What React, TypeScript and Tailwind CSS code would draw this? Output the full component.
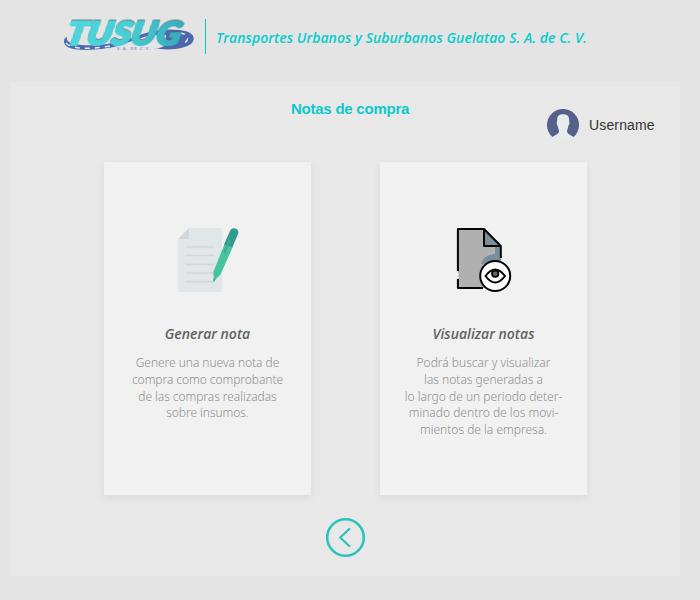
import React from "react";

function Logo() {
  return (
    <svg width="134" height="50" viewBox="0 -8 134 50" className="block shrink-0">
      <defs>
        <linearGradient id="aqua" gradientUnits="userSpaceOnUse" x1="0" x2="125" y1="-20" y2="0">
          <stop offset="0" stopColor="#50d8de" />
          <stop offset="0.5" stopColor="#46ced5" />
          <stop offset="1" stopColor="#35a5b5" />
        </linearGradient>
      </defs>
      <path
        d="M5 22C1 23 0 30 8 33C20 37 44 34 56 31C74 25 86 18 104 20L104 30C99 33 96 33.5 92 33C106 36 124 34 130 28C135 21 129 16 117 15C100 13 86 17 72 22C50 30 28 32 12 29C7 28 4 25 5 22Z"
        fill="#4d68ac"
      />
      <path d="M4 28C11 36 40 34 60 28M118 18C126 19 129 24 121 29" fill="none" stroke="#e7edf5" strokeWidth="1.4" strokeDasharray="5 5" />
      <g
        transform="translate(0 30) skewX(-12)"
        fontFamily="Lato, sans-serif"
        fontSize="32"
        fontWeight="900"
        fontStyle="italic"
        strokeLinejoin="round"
      >
        <text x="3" y="0" textLength="114" lengthAdjust="spacingAndGlyphs" paintOrder="stroke" fill="url(#aqua)" stroke="url(#aqua)" strokeWidth="2.2" className="drop-shadow-[0_-0.5px_0.3px_rgba(70,100,115,0.8)]">TUSUG</text>
      </g>
      <text x="55" y="34.5" textLength="33" fontFamily="Liberation Sans, sans-serif" fontSize="3.8" fontWeight="700" fill="#8593bf">S.A. DE C.V.</text>
    </svg>
  );
}

function Avatar() {
  return (
    <svg width="32" height="32" viewBox="0 0 32 32" className="block shrink-0">
      <path d="M5.5 28A16 16 0 1 1 26.5 28Z" fill="#56618b" />
      <path d="M10.2 10C9.6 3.5 22.6 3.5 22 10L22.3 13C22.8 15 21.8 16 21.3 17C20.8 20 20.2 21 20 22C20 25 24 26 26.5 28Q16 34 5.5 28C8 26 12 25 12 22C11.8 21 11.2 19 10.7 17C10 16 9.2 14 10 13Z" fill="#e7eced" />
    </svg>
  );
}

function NoteIcon() {
  return (
    <svg width="62" height="66" viewBox="0 0 62 66" className="block">
      <path d="M11 1H42Q44 1 44 3V63Q44 65 42 65H2Q0 65 0 63V12Z" fill="#e1e6e9" />
      <path d="M11 1V12H0Z" fill="#d5d6db" />
      <path d="M8 20H36M8 28.5H36M8 37.3H36M8 46H36M8 54.7H36" stroke="#d5d6db" strokeWidth="1.7" strokeLinecap="round" />
      <path d="M47 16L55 19.5L42.5 47.5L36 54L35.3 45Z" fill="#47c3a0" />
      <path d="M46 17.5L52 4C53 1 56 .5 58.5 2C60.5 3.2 60.8 5 60 7L54.5 20Z" fill="#329a8e" />
      <path d="M51.5 13L46.5 25" stroke="#3dab98" strokeWidth="2" strokeLinecap="round" />
      <path d="M35.5 51V55L37.5 52.7Z" fill="#329a8e" />
    </svg>
  );
}

function ViewIcon() {
  return (
    <svg width="56" height="66" viewBox="0 0 56 66" className="block">
      <path d="M2 2H28L45 19V37L28 61H2Z" fill="#b0b0b0" />
      <path d="M28 2V19H45ZM39 19H45V37H25Q27 28 39 27Z" fill="#798f9b" />
      <path d="M1.9 44V2H28L44.8 19V31M28 2V19H44.8M1.9 52V61H27" fill="none" stroke="#050505" strokeWidth="2" strokeLinejoin="round" />
      <path d="M.5 47.3H3M.5 50.3H3" stroke="#fff" strokeWidth="1.3" />
      <circle cx="39.2" cy="49" r="15" fill="#fff" stroke="#050505" strokeWidth="2" />
      <path d="M29.5 49Q39.2 36 49 49Q39.2 62 29.5 49Z" fill="#fff" stroke="#050505" strokeWidth="2" strokeLinejoin="round" />
      <circle cx="39.2" cy="46.7" r="3.2" fill="#666" stroke="#050505" strokeWidth="1.8" />
    </svg>
  );
}

export default function App() {
  return (
    <div className="h-[600px] w-[700px] overflow-hidden bg-[#e4e4e4]">
      <header className="flex h-[82px] items-start pl-[62px]">
        <div className="pt-[7px]"><Logo /></div>
        <div className="ml-[9px] mt-[19px] h-[35px] w-px bg-[#00cccc]" />
        <h1 className="ml-[10px] mt-7 whitespace-nowrap font-['Open_Sans','Noto_Sans',sans-serif] text-[14px] font-semibold italic leading-5 tracking-[0.05px] text-[#06cccc]">
          Transportes Urbanos y Suburbanos Guelatao S. A. de C. V.
        </h1>
      </header>
      <main className="ml-[10px] flex h-[494px] w-[670px] flex-col bg-[#e8e8e8]">
        <div className="h-20 pl-[281px] pt-[17px] font-['Liberation_Sans',Arial,sans-serif]">
          <h2 className="whitespace-nowrap text-[15px] font-bold leading-5 tracking-[-0.24px] text-[#0cc9cb]">Notas de compra</h2>
        </div>
        <div className="-mt-[53px] ml-[537px] flex h-8 items-center gap-[10px] font-['Liberation_Sans',Arial,sans-serif]">
          <Avatar />
          <span className="text-[14px] leading-5 tracking-[0.15px] text-[#333]">Username</span>
        </div>
        <section className="ml-[94px] mt-[21px] flex gap-[69px] font-['Noto_Sans','Open_Sans',sans-serif]">
          <article className="flex h-[333px] w-[207px] flex-col items-center bg-[#f1f1f1] shadow-[0_3px_8px_rgba(0,0,0,0.06)]">
            <div className="ml-[2px] mt-[65px] h-[66px]"><NoteIcon /></div>
            <h3 className="mt-[31px] whitespace-nowrap font-['Open_Sans',sans-serif] text-[14px] font-semibold italic leading-5 text-[#616161]">Generar nota</h3>
            <p className="mt-[11px] whitespace-nowrap text-center text-[12px] font-light leading-[16.8px] tracking-[-0.05px] text-[#8f8f8f]">
              Genere una nueva nota de<br />compra como comprobante<br />de las compras realizadas<br />sobre insumos.
            </p>
          </article>
          <article className="flex h-[333px] w-[207px] flex-col items-center bg-[#f1f1f1] shadow-[0_3px_8px_rgba(0,0,0,0.06)]">
            <div className="mt-[65px] h-[66px]"><ViewIcon /></div>
            <h3 className="mt-[31px] whitespace-nowrap font-['Open_Sans',sans-serif] text-[14px] font-semibold italic leading-5 text-[#616161]">Visualizar notas</h3>
            <p className="mt-[11px] whitespace-nowrap text-center text-[12px] font-light leading-[16.8px] text-[#8f8f8f]">
              Podrá buscar y visualizar<br />las notas generadas a<br />lo largo de un periodo deter-<br />minado dentro de los movi-<br />mientos de la empresa.
            </p>
          </article>
        </section>
        <button aria-label="Volver" className="ml-[315px] mt-[22px] h-[41px] w-[41px]">
          <svg width="41" height="41" viewBox="0 0 41 41" fill="none" stroke="#2bc4bc">
            <circle cx="20.5" cy="20.5" r="18.3" strokeWidth="2.6" />
            <path d="M24.3 12L15.2 20.5L24.3 29" strokeWidth="2.3" strokeLinecap="round" strokeLinejoin="round" />
          </svg>
        </button>
      </main>
    </div>
  );
}
